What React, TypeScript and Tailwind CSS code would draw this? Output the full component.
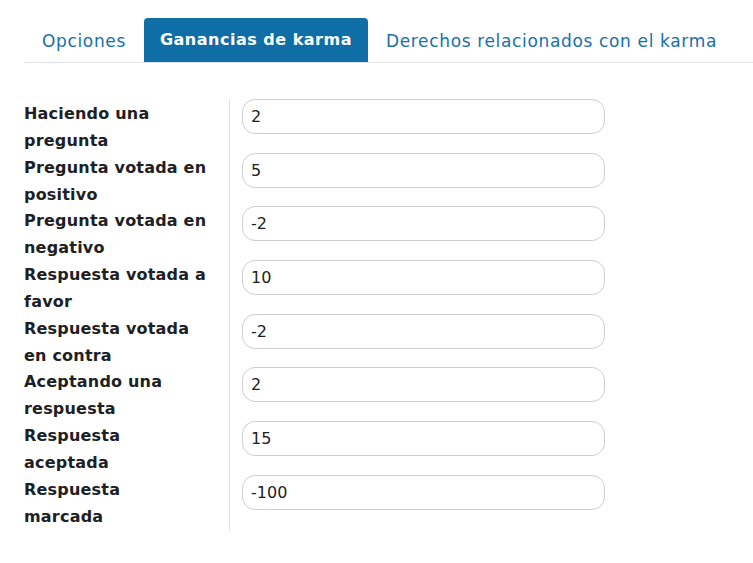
import React from 'react';

const tabs = ['Opciones', 'Ganancias de karma', 'Derechos relacionados con el karma'];

const rows: { label: [string, string]; value: string }[] = [
  { label: ['Haciendo una', 'pregunta'], value: '2' },
  { label: ['Pregunta votada en', 'positivo'], value: '5' },
  { label: ['Pregunta votada en', 'negativo'], value: '-2' },
  { label: ['Respuesta votada a', 'favor'], value: '10' },
  { label: ['Respuesta votada', 'en contra'], value: '-2' },
  { label: ['Aceptando una', 'respuesta'], value: '2' },
  { label: ['Respuesta', 'aceptada'], value: '15' },
  { label: ['Respuesta', 'marcada'], value: '-100' },
];

const App: React.FC = () => {
  return (
    <div className="min-h-screen bg-white pt-[18px] font-['DejaVu_Sans',sans-serif] text-[#1d2125]">
      <ul className="ml-6 flex border-b border-[#dee2e6]">
        {tabs.map((tab, i) => (
          <li key={tab}>
            <span
              className={
                i === 1
                  ? 'block h-[44px] rounded-t-[4px] bg-[#0f6ea6] px-4 text-[16px] font-bold leading-[44px] tracking-[0.5px] text-white'
                  : 'block h-[44px] px-[18px] text-[17px] leading-[46px] tracking-[0.65px] text-[#1670ac]'
              }
            >
              {tab}
            </span>
          </li>
        ))}
      </ul>

      <div className="ml-6 mt-[36px] flex w-[581px]">
        <div className="w-[206px] border-r border-[#dee2e6] pr-3 pt-[2px]">
          {rows.map((row) => (
            <div key={row.value + row.label[0]} className="h-[53.7px] text-[16px] font-bold leading-[26.85px] tracking-[0.2px]">
              {row.label[0]}
              <br />
              {row.label[1]}
            </div>
          ))}
        </div>
        <div className="flex-1 pl-3">
          {rows.map((row) => (
            <div key={row.value + row.label[0]} className="h-[53.7px]">
              <input
                type="text"
                defaultValue={row.value}
                className="h-[35px] w-[363px] rounded-[13px] border border-[#cfcfcf] bg-white px-2 text-[16px] text-[#1d2125] outline-none"
              />
            </div>
          ))}
        </div>
      </div>
    </div>
  );
};

export default App;
